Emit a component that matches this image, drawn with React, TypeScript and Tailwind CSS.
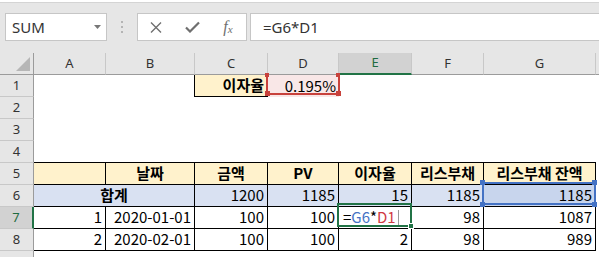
import type { ReactNode } from "react";
import { clsx } from "clsx";

const FONT = "font-['Noto_Sans_CJK_KR',sans-serif]";
const UI_FONT = "font-['Noto_Sans','Noto_Sans_CJK_KR',sans-serif]";

const COLS = ["A", "B", "C", "D", "E", "F", "G", ""];

const YELLOW = "bg-[#fff2cc]";
const BLUE = "bg-[#d9e1f2]";
const BOX = "border-r border-b border-black";

function RowHead({ n, active }: { n: number; active?: boolean }) {
  return (
    <div
      className={clsx(
        UI_FONT,
        "flex items-center justify-center border-b border-b-[#c8c8c8] text-[13px]",
        active
          ? "border-r-2 border-r-[#217346] bg-[#d2d2d2] text-[#1e6b41]"
          : "border-r border-r-[#9b9b9b] bg-[#e6e6e6] text-[#333]",
      )}
    >
      {n}
    </div>
  );
}

function Cell({
  children,
  className,
  align = "right",
  bold,
}: {
  children?: ReactNode;
  className?: string;
  align?: "left" | "right" | "center";
  bold?: boolean;
}) {
  return (
    <div
      className={clsx(
        FONT,
        "flex items-center overflow-hidden whitespace-nowrap px-[3px] text-[15px] text-black",
        align === "right" && "justify-end",
        align === "center" && "justify-center",
        bold && "font-bold",
        className,
      )}
    >
      {children}
    </div>
  );
}

function EmptyRow({ n, bottom }: { n: number; bottom?: boolean }) {
  return (
    <>
      <RowHead n={n} />
      {COLS.map((c) => (
        <Cell key={c} className={bottom && c !== "" ? "border-b border-black" : undefined} />
      ))}
    </>
  );
}

function Toolbar() {
  return (
    <div className="h-[51px] bg-[#e6e6e6]">
      <div className="mt-[2px] flex items-start border-t border-[#d4d4d4] pl-[5px] pt-[10px]">
        <div className={clsx(UI_FONT, "flex h-[28px] w-[102px] items-center justify-between border border-[#c6c6c6] bg-white pl-[6px] pr-[5px] text-[15px] text-[#333]")}>
          <span>SUM</span>
          <svg width="7" height="4" viewBox="0 0 7 4">
            <path d="M0 0h7L3.5 4z" fill="#777" />
          </svg>
        </div>
        <div className="flex h-[28px] w-[30px] flex-col items-center justify-center gap-[3px]">
          <span className="h-[2px] w-[2px] bg-[#b4b4b4]" />
          <span className="h-[2px] w-[2px] bg-[#b4b4b4]" />
          <span className="h-[2px] w-[2px] bg-[#b4b4b4]" />
        </div>
        <div className="flex h-[28px] w-[110px] border border-[#c6c6c6] bg-white">
          <div className="flex w-[36px] items-center justify-center">
            <svg width="12" height="11" viewBox="0 0 12 11">
              <path d="M1 0.5l10 10M11 0.5l-10 10" stroke="#6f6f6f" strokeWidth="1.4" />
            </svg>
          </div>
          <div className="flex w-[36px] items-center justify-center">
            <svg width="15" height="12" viewBox="0 0 15 12">
              <path d="M1 6.5l4 4 9-9" stroke="#6f6f6f" strokeWidth="2.2" fill="none" />
            </svg>
          </div>
          <div className="flex w-[36px] items-center justify-center font-['Liberation_Serif',serif] italic text-[#6f6f6f]">
            <span className="text-[16px] leading-none">f</span>
            <span className="mt-[5px] text-[11px] leading-none">x</span>
          </div>
        </div>
        <div className={clsx(UI_FONT, "ml-[3px] flex h-[28px] flex-1 items-center border-y border-l border-[#c6c6c6] bg-white pl-[12px] text-[15px] text-[#333]")}>
          =G6*D1
        </div>
      </div>
    </div>
  );
}

export default function App() {
  return (
    <div className="relative h-[257px] w-[599px] overflow-hidden bg-white">
      <Toolbar />
      <div className="grid auto-rows-[22px] grid-cols-[34px_72px_89px_73px_71px_73px_72px_112px_1fr]">
        {/* column headers */}
        <div className="relative border-b border-r border-[#9b9b9b] bg-[#e6e6e6]">
          <svg className="absolute bottom-[3px] right-[3px]" width="14" height="14" viewBox="0 0 14 14">
            <path d="M14 0v14H0z" fill="#b6b6b6" />
          </svg>
        </div>
        {COLS.map((c) => (
          <div
            key={c || "H"}
            className={clsx(
              UI_FONT,
              "flex items-center justify-center border-r border-r-[#c8c8c8] text-[13px]",
              c === "E"
                ? "border-b-2 border-b-[#217346] bg-[#d2d2d2] text-[#1e6b41]"
                : "border-b border-b-[#9b9b9b] bg-[#e6e6e6] text-[#333]",
            )}
          >
            {c}
          </div>
        ))}

        {/* row 1 */}
        <RowHead n={1} />
        <Cell />
        <Cell className="border-r border-black" />
        <Cell bold className={clsx(YELLOW, BOX)}>이자율</Cell>
        <Cell className="bg-[#f9e7e7]">0.195%</Cell>
        <Cell />
        <Cell />
        <Cell />
        <Cell />

        <EmptyRow n={2} />
        <EmptyRow n={3} />
        <EmptyRow n={4} bottom />

        {/* row 5 */}
        <RowHead n={5} />
        <Cell className={clsx(YELLOW, BOX)} />
        <Cell bold align="center" className={clsx(YELLOW, BOX)}>날짜</Cell>
        <Cell bold align="center" className={clsx(YELLOW, BOX)}>금액</Cell>
        <Cell bold align="center" className={clsx(YELLOW, BOX)}>PV</Cell>
        <Cell bold align="center" className={clsx(YELLOW, BOX)}>이자율</Cell>
        <Cell bold align="center" className={clsx(YELLOW, BOX)}>리스부채</Cell>
        <Cell bold align="center" className={clsx(YELLOW, BOX)}>리스부채 잔액</Cell>
        <Cell />

        {/* row 6 */}
        <RowHead n={6} />
        <Cell bold align="center" className={clsx("col-span-2", BLUE, BOX)}>합계</Cell>
        <Cell className={clsx(BLUE, BOX)}>1200</Cell>
        <Cell className={clsx(BLUE, BOX)}>1185</Cell>
        <Cell className={clsx(BLUE, BOX)}>15</Cell>
        <Cell className={clsx(BLUE, BOX)}>1185</Cell>
        <Cell className={clsx("bg-[#c8d5ed]", BOX)}>1185</Cell>
        <Cell />

        {/* row 7 */}
        <RowHead n={7} active />
        <Cell className={BOX}>1</Cell>
        <Cell className={BOX}>2020-01-01</Cell>
        <Cell className={BOX}>100</Cell>
        <Cell className={BOX}>100</Cell>
        <Cell align="left" className={BOX}>
          <span className="ml-[1px]">=</span>
          <span className="text-[#4472c4]">G6</span>
          <span>*</span>
          <span className="text-[#d03a44]">D1</span>
          <span className="ml-[2px] h-[15px] w-px bg-[#9a9a9a]" />
        </Cell>
        <Cell className={BOX}>98</Cell>
        <Cell className={BOX}>1087</Cell>
        <Cell />

        {/* row 8 */}
        <RowHead n={8} />
        <Cell className={BOX}>2</Cell>
        <Cell className={BOX}>2020-02-01</Cell>
        <Cell className={BOX}>100</Cell>
        <Cell className={BOX}>100</Cell>
        <Cell className={BOX}>2</Cell>
        <Cell className={BOX}>98</Cell>
        <Cell className={BOX}>989</Cell>
        <Cell />

        <EmptyRow n={9} />
      </div>

      {/* D1 reference highlight */}
      <div className="absolute left-[266px] top-[73px] h-[22px] w-[74px] border-x-2 border-b-2 border-[#c8423c]" />
      <div className="absolute left-[265px] top-[73px] h-[4px] w-[4px] bg-[#c8423c]" />
      <div className="absolute left-[336px] top-[73px] h-[4px] w-[4px] bg-[#c8423c]" />
      <div className="absolute left-[265px] top-[91px] h-[5px] w-[5px] bg-[#c8423c]" />
      <div className="absolute left-[336px] top-[91px] h-[5px] w-[5px] bg-[#c8423c]" />

      {/* G6 reference highlight */}
      <div className="absolute left-[482px] top-[182px] h-[23px] w-[114px] border-2 border-[#4472c4]" />
      <div className="absolute left-[480px] top-[180px] h-[5px] w-[5px] bg-[#4472c4]" />
      <div className="absolute left-[592px] top-[180px] h-[5px] w-[5px] bg-[#4472c4]" />
      <div className="absolute left-[480px] top-[202px] h-[5px] w-[5px] bg-[#4472c4]" />
      <div className="absolute left-[592px] top-[202px] h-[5px] w-[5px] bg-[#4472c4]" />

      {/* active cell E7 */}
      <div className="absolute left-[337px] top-[203px] h-[24px] w-[75px] border-2 border-[#217346]" />
      <div className="absolute left-[408px] top-[223px] h-[6px] w-[6px] border border-white bg-[#217346]" />
    </div>
  );
}
